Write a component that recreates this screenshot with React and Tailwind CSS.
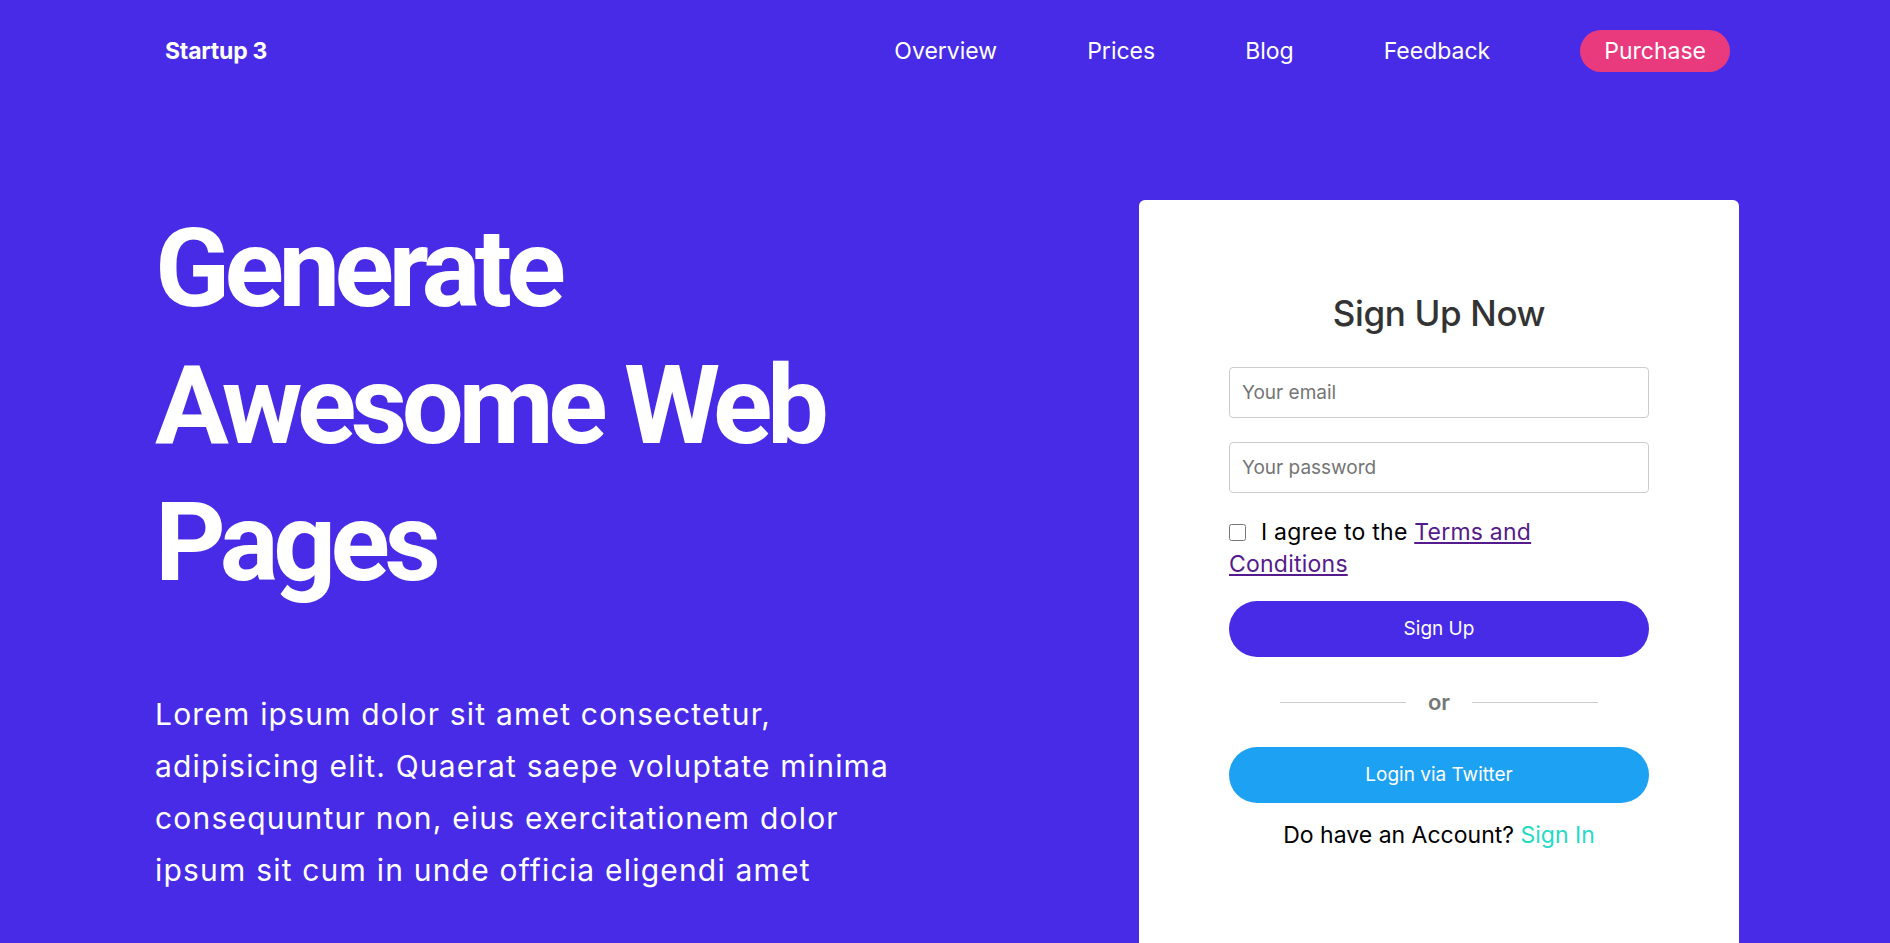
export default function App() {
  return (
    <div className="min-h-screen bg-[#482be7] font-['Inter',sans-serif] text-white">
      <nav className="flex h-[102px] items-center justify-between pl-[165px] pr-[160px]">
        <a href="#" className="text-[23px] font-bold tracking-[-0.01em]">
          Startup 3
        </a>
        <div className="flex items-center gap-[90px] text-[23px]">
          <a href="#">Overview</a>
          <a href="#">Prices</a>
          <a href="#">Blog</a>
          <a href="#">Feedback</a>
          <a href="#" className="rounded-full bg-[#e93a7d] px-6 py-1">
            Purchase
          </a>
        </div>
      </nav>

      <section className="flex items-start justify-between pl-[155px] pr-[151px] pt-[98px]">
        <div className="w-[760px]">
          <h1 className="font-['Roboto',sans-serif] text-[110px] font-bold leading-[137px] tracking-[-0.05em]">
            Generate Awesome Web Pages
          </h1>
          <p className="mt-[77px] w-[752px] text-[30px] leading-[52px] tracking-[0.04em]">
            Lorem ipsum dolor sit amet consectetur, adipisicing elit. Quaerat
            saepe voluptate minima consequuntur non, eius exercitationem dolor
            ipsum sit cum in unde officia eligendi amet
          </p>
        </div>

        <div className="w-[600px] rounded-md bg-white px-[90px] pb-[100px] pt-[91px]">
          <h2 className="text-center text-[35px] font-medium leading-[44px] tracking-[-0.01em] text-[#333]">
            Sign Up Now
          </h2>
          <form className="mt-8 flex flex-col">
            <input
              type="email"
              placeholder="Your email"
              className="h-[51px] w-full rounded border border-[#ccc] px-3 text-[19px] text-[#333] outline-none placeholder:text-[#757575]"
            />
            <input
              type="password"
              placeholder="Your password"
              className="mt-6 h-[51px] w-full rounded border border-[#ccc] px-3 text-[19px] text-[#333] outline-none placeholder:text-[#757575]"
            />
            <label className="mt-[23px] max-w-[340px] text-[23px] leading-8 tracking-[0.01em] text-black">
              <input
                type="checkbox"
                className="mr-[15px] h-[17px] w-[17px] align-[-1px]"
              />
              I agree to the{" "}
              <a href="#" className="text-[#551a8b] underline">
                Terms and Conditions
              </a>
            </label>
            <button
              type="button"
              className="mt-[21px] h-14 rounded-full bg-[#482be7] text-[19px] text-white"
            >
              Sign Up
            </button>
            <div className="my-[33px] flex items-center justify-center gap-[22px]">
              <span className="h-px w-[126px] bg-[#ccc]" />
              <span className="text-[22px] font-semibold leading-6 text-[#777]">
                or
              </span>
              <span className="h-px w-[126px] bg-[#ccc]" />
            </div>
            <button
              type="button"
              className="h-14 rounded-full bg-[#1da1f2] text-[19px] text-white"
            >
              Login via Twitter
            </button>
            <p className="mt-4 text-center text-[23px] leading-8 text-black">
              Do have an Account?{" "}
              <a href="#" className="text-[#25dac5]">
                Sign In
              </a>
            </p>
          </form>
        </div>
      </section>
    </div>
  );
}
